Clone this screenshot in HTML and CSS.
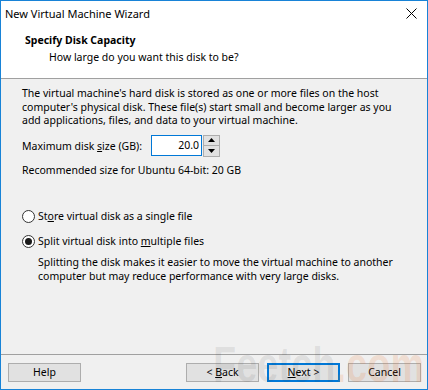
FILE: index.html
```html
<!DOCTYPE html>
<html lang="en">
<head>
    <meta charset="UTF-8">
    <title>New Virtual Machine Wizard</title>
    <link rel="stylesheet" href="styles.css">
</head>
<body>

    <div class="window">
        <div class="top">
            <div class="titlebar">
                <span class="title">New Virtual Machine Wizard</span>
                <svg class="close" width="11" height="11" viewBox="0 0 11 11">
                    <path d="M0.5 0.5 L10.5 10.5 M10.5 0.5 L0.5 10.5" stroke="#000" stroke-width="1" fill="none"/>
                </svg>
            </div>
            <div class="header">
                <div class="heading">Specify Disk Capacity</div>
                <div class="subheading">How large do you want this disk to be?</div>
            </div>
        </div>

        <div class="content">
            <p class="intro">The virtual machine's hard disk is stored as one or more files on the host computer's physical disk. These file(s) start small and become larger as you add applications, files, and data to your virtual machine.</p>

            <div class="size-row">
                <label class="size-label">Maximum disk <u>s</u>ize (GB):</label>
                <div class="spinner">
                    <div class="spin-value">20.0</div>
                    <div class="spin-buttons">
                        <div class="spin-btn">
                            <svg width="7" height="4" viewBox="0 0 7 4"><path d="M3.5 0 L7 4 L0 4 Z" fill="#000"/></svg>
                        </div>
                        <div class="spin-btn">
                            <svg width="7" height="4" viewBox="0 0 7 4"><path d="M0 0 L7 0 L3.5 4 Z" fill="#000"/></svg>
                        </div>
                    </div>
                </div>
            </div>

            <p class="recommended">Recommended size for Ubuntu 64-bit: 20 GB</p>

            <div class="option first">
                <span class="radio"></span>
                <span>St<u>o</u>re virtual disk as a single file</span>
            </div>
            <div class="option">
                <span class="radio checked"></span>
                <span>Split virtual disk into <u>m</u>ultiple files</span>
            </div>
            <p class="option-note">Splitting the disk makes it easier to move the virtual machine to another computer but may reduce performance with very large disks.</p>
        </div>

        <div class="footer">
            <div class="btn">Help</div>
            <div class="spacer"></div>
            <div class="btn">&lt; <u>B</u>ack</div>
            <div class="btn default"><u>N</u>ext &gt;</div>
            <div class="btn">Cancel</div>
        </div>

        <!-- site watermark over the footer -->
        <div class="watermark" aria-hidden="true">Feetch<span>.com</span></div>
    </div>

</body>
</html>
```

FILE: styles.css
```css
body {
    margin: 0;
    font-family: "Noto Sans", sans-serif;
    font-size: 10.5px;
    color: #000;
}
u {
    text-decoration-thickness: 1px;
    text-underline-offset: 1px;
}
.window {
    position: relative;
    width: 428px;
    height: 390px;
    box-sizing: border-box;
    border: 1px solid #1883d7;
    display: flex;
    flex-direction: column;
    background: #f0f0f0;
    overflow: hidden;
}

/* Title bar and page header */
.top {
    background: #fff;
    height: 77px;
    border-bottom: 1px solid #a0a0a0;
}
.titlebar {
    height: 24px;
    display: flex;
    align-items: center;
    padding: 0 10px 0 4px;
}
.title {
    flex: 1;
    font-size: 11px;
}
.close {
    display: block;
}
.header {
    padding-top: 7px;
}
.heading {
    font-weight: bold;
    line-height: 16px;
    padding-left: 24px;
}
.subheading {
    line-height: 16px;
    padding-left: 48px;
    margin-top: 1px;
}

/* Main content */
.content {
    flex: 1;
    padding: 8px 21px 0;
}
.content p {
    margin: 0;
    line-height: 13.5px;
}
.size-row {
    display: flex;
    align-items: center;
    margin-top: 7px;
}
.size-label {
    width: 129px;
}
.spinner {
    display: flex;
}
.spin-value {
    width: 47px;
    height: 19px;
    border: 1px solid #0078d7;
    background: #fff;
    text-align: right;
    line-height: 19px;
    padding-right: 2px;
}
.spin-buttons {
    display: flex;
    flex-direction: column;
    margin-left: 1px;
}
.spin-btn {
    width: 15px;
    height: 9px;
    border: 1px solid #adadad;
    background: #e1e1e1;
    display: flex;
    align-items: center;
    justify-content: center;
}
.spin-btn + .spin-btn {
    border-top: none;
    height: 10px;
}
.recommended {
    margin-top: 7px !important;
}
.option {
    display: flex;
    align-items: center;
    height: 16px;
    gap: 3px;
    margin-top: 9px;
}
.option.first {
    margin-top: 31px;
}
.radio {
    width: 11px;
    height: 11px;
    border: 1px solid #333;
    border-radius: 50%;
    background: #fff;
    display: flex;
    align-items: center;
    justify-content: center;
}
.radio.checked::after {
    content: "";
    width: 7px;
    height: 7px;
    border-radius: 50%;
    background: #1a1a1a;
}
.option-note {
    padding-left: 16px;
    margin-top: 7px !important;
}

/* Footer buttons */
.footer {
    border-top: 1px solid #a0a0a0;
    display: flex;
    gap: 8px;
    padding: 8px 6px 7px 7px;
}
.spacer {
    flex: 1;
}
.btn {
    width: 71px;
    height: 17px;
    border: 1px solid #adadad;
    background: #e1e1e1;
    text-align: center;
    line-height: 17px;
}
.btn.default {
    width: 69px;
    height: 15px;
    line-height: 15px;
    border: 2px solid #0078d7;
}

.watermark {
    position: absolute;
    left: 212px;
    top: 339px;
    font-family: "Liberation Sans", sans-serif;
    font-weight: bold;
    font-size: 50px;
    line-height: 1;
    transform: scaleX(0.76);
    transform-origin: left top;
    color: rgba(60, 60, 60, 0.1);
    pointer-events: none;
    white-space: nowrap;
}
.watermark span {
    color: rgba(235, 120, 50, 0.16);
}
```
